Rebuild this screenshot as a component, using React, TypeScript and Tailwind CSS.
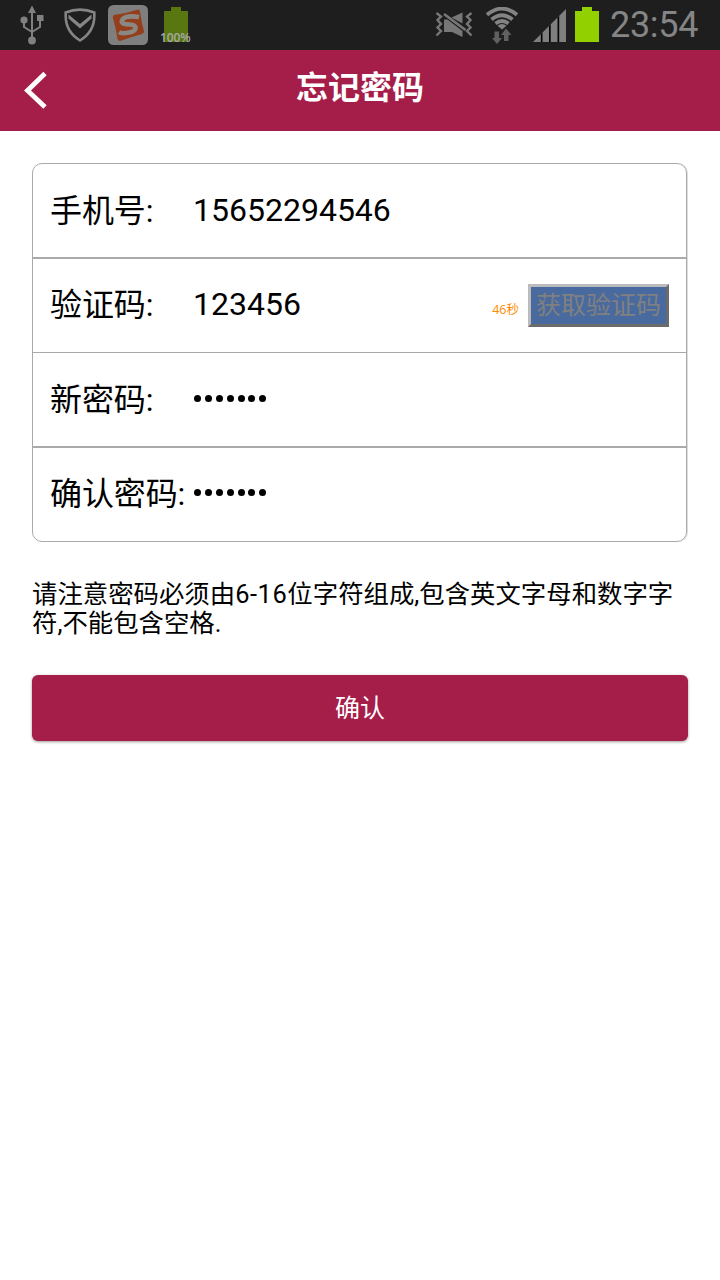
import type { ReactNode } from "react"

function UsbIcon() {
  return (
    <svg width="24" height="40" viewBox="0 0 24 40" fill="none" stroke="#808080" strokeWidth="2">
      <path d="M12 6v29M4 15v7l8 5M20 13v9l-8 5" />
      <path d="M12 0.5 16 8H8z" fill="#808080" stroke="none" />
      <circle cx="4" cy="15" r="3.6" fill="#808080" stroke="none" />
      <path d="M17 10h6.500v6H17z" fill="#808080" stroke="none" />
      <circle cx="12" cy="35.500" r="3.900" fill="#808080" stroke="none" />
    </svg>
  )
}

function ShieldIcon() {
  return (
    <svg width="32" height="36" viewBox="0 0 32 36" fill="none">
      <path d="M1.700 5.500Q16-.2 30.300 5.500v3.500C30.300 20 25 28 16 33.500 7 28 1.700 20 1.700 9z" stroke="#858585" strokeWidth="2.600" />
      <path d="M4.500 7.500 16 17 27.500 7.500v4L16 21.500 4.500 11.500z" fill="#858585" />
    </svg>
  )
}

function SogouIcon() {
  return (
    <svg width="40" height="40" viewBox="0 0 40 40" fill="none">
      <rect width="40" height="40" rx="5.500" fill="#7f7f7f" />
      <path d="M6 10Q18 8.500 30 4.500q1.500 0 2 2 1.500 11 4 20 0 1.500-2 2.500Q23 32 12 36q-2 0-2.500-2Q8 23 4.800 12.500 4.500 10.500 6 10z" fill="#943e1b" />
      <path d="M31 12Q18 10 14.500 14.500c-3 4.500 3 5 7.500 5 8 .4 7 6.500-1 8-5 1-9 .4-10-.3" stroke="#8b8782" strokeWidth="4.600" />
    </svg>
  )
}

function BatteryShape({ className }: { className: string }) {
  return (
    <svg width="24" height="36" viewBox="0 0 24 36" className={className}>
      <path d="M7 0h10v4h7v31H0V4h7z" fill="currentColor" />
    </svg>
  )
}

function MutedIcon() {
  return (
    <svg width="38" height="26" viewBox="0 0 38 26" fill="none">
      <path d="M1.500 1 6 4.500 2.500 8 6 12l-3.500 3.500L6 19l-4.500 4.500M36.500 1 32 4.500 35.500 8 32 12l3.500 3.500L32 19l4.500 4.500" stroke="#777" strokeWidth="2.400" />
      <path d="M16.500 5.500 27.500 0.500V11.500zM9 7.500h3.500L27.500 19v6L17 20H9z" fill="#777" />
      <path d="M9 2 30.500 18" stroke="#777" strokeWidth="2.800" />
    </svg>
  )
}

function WifiIcon() {
  return (
    <svg width="34" height="37" viewBox="0 0 34 37" fill="none">
      <path d="M2 7.800Q17-4.500 32 7.800M6.500 12.500Q17 4 27.500 12.500M10.500 16.500Q17 11.500 23.500 16.500" stroke="#838383" strokeWidth="3.800" />
      <path d="M12.500 18.800Q17 15.300 21.500 18.800L17 22.500z" fill="#838383" />
      <path d="M9.500 24.500h4.500v6.500h3L12 37l-5-6h2.500zM19 34h4.500v-6h3L21 21.500 16 28h3z" fill="#606060" />
    </svg>
  )
}

function SignalIcon() {
  return (
    <svg width="33" height="33" viewBox="0 0 33 33">
      <path d="M0 33 33 0v33z" fill="#7f7f7f" />
      <path d="M7.800 25.200l1.700-1.700V33H7.800zM16 17l1.700-1.700V33H16zM24.500 8.500l1.700-1.700V33h-1.700z" fill="#050505" />
    </svg>
  )
}

function StatusBar() {
  return (
    <div className="flex h-[50px] items-start bg-[#1e1e1e] pt-[5px] pl-5">
      <UsbIcon />
      <div className="mt-0.5 ml-5">
        <ShieldIcon />
      </div>
      <div className="ml-3">
        <SogouIcon />
      </div>
      <div className="relative mt-0.5 ml-4">
        <BatteryShape className="text-[#587710]" />
        <span className="absolute top-[24px] -left-[4px] font-['Open_Sans'] text-[12px] leading-[14px] font-semibold tracking-[-0.1px] text-[#aaa]">
          100%
        </span>
      </div>
      <div className="mt-[7px] ml-[247px]">
        <MutedIcon />
      </div>
      <div className="mt-0.5 ml-[12px]">
        <WifiIcon />
      </div>
      <div className="mt-1 ml-[14px]">
        <SignalIcon />
      </div>
      <div className="mt-0.5 ml-[9px]">
        <BatteryShape className="text-[#92d000]" />
      </div>
      <span className="ml-[11px] font-[Roboto] text-[36px] leading-[40px] tracking-[-0.3px] text-[#858585]">23:54</span>
    </div>
  )
}

function Header() {
  return (
    <header className="flex h-[81px] items-start bg-[#a51d49]">
      <button className="mt-[20px] ml-6 h-10 w-6" aria-label="返回">
        <svg width="24" height="40" viewBox="0 0 24 40" fill="none">
          <path d="M21 3.500 3.500 20.500 21 37" stroke="#fff" strokeWidth="4.800" />
        </svg>
      </button>
      <h1 className="mr-12 flex-1 pt-[18px] text-center text-[32px] leading-[40px] font-bold text-white">忘记密码</h1>
    </header>
  )
}

function Field({ label, className, children }: { label: string; className: string; children: ReactNode }) {
  return (
    <div className={`flex items-center border-[#aaa] pl-[17px] text-[32px] ${className}`}>
      <span className="w-[143px] shrink-0 pt-px tracking-[-0.1px] whitespace-nowrap">{label}</span>
      {children}
    </div>
  )
}

function Password({ length }: { length: number }) {
  return (
    <div className="mb-px flex gap-[3.900px] pl-[1px]">
      {Array.from({ length }, (_, i) => (
        <span key={i} className="size-[7px] rounded-full bg-black" />
      ))}
    </div>
  )
}

export default function App() {
  return (
    <div className="min-h-screen bg-white font-[Roboto,'Noto_Sans_CJK_SC',sans-serif] text-black">
      <StatusBar />
      <Header />
      <main className="px-8 pt-8">
        <div className="w-[655px] rounded-[10px] border border-[#aaa] shadow-[1px_0_0_#ddd]">
          <Field label="手机号:" className="h-[95px] border-b-2 pb-px">
            <span>15652294546</span>
          </Field>
          <Field label="验证码:" className="h-[94px] border-b pb-[3px]">
            <span>123456</span>
            <span className="mt-[12px] ml-auto font-['Open_Sans','Noto_Sans_CJK_SC',sans-serif] text-[12.500px] text-[#ff8c00]">
              46秒
            </span>
            <button
              disabled
              className="mt-[3px] mr-[17px] ml-[9px] h-[43px] w-[141px] border-[3px] border-t-[#bbb] border-r-[#6b6b6b] border-b-[#6b6b6b] border-l-[#bbb] bg-[#496a9e] text-[25px] leading-[35px] whitespace-nowrap text-[#808080]"
            >
              获取验证码
            </button>
          </Field>
          <Field label="新密码:" className="h-[95px] border-b-2 pb-px">
            <Password length={7} />
          </Field>
          <Field label="确认密码:" className="h-[93px] pb-[3px]">
            <Password length={7} />
          </Field>
        </div>
        <p className="mt-[38px] text-[25.400px] leading-[29px]">
          请注意密码必须由<span className="tracking-[0.600px]">6-16</span>位字符组成,包含英文字母和数字字
          <br />
          符,不能包含空格.
        </p>
        <button className="mt-[37px] h-[66px] w-full rounded-[6px] bg-[#a51d49] pt-[2px] text-[25px] text-white shadow-[0_1px_3px_rgba(0,0,0,0.4)]">
          确认
        </button>
      </main>
    </div>
  )
}
